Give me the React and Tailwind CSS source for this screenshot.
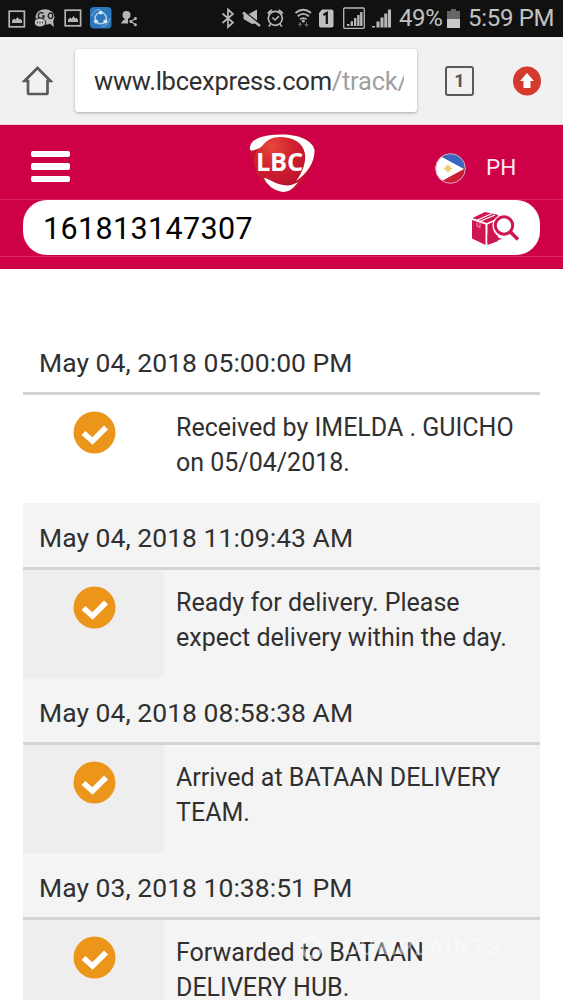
const rows = [
  { date: 'May 04, 2018 05:00:00 PM', lines: ['Received by IMELDA . GUICHO', 'on 05/04/2018.'], plain: true },
  { date: 'May 04, 2018 11:09:43 AM', lines: ['Ready for delivery. Please', 'expect delivery within the day.'] },
  { date: 'May 04, 2018 08:58:38 AM', lines: ['Arrived at BATAAN DELIVERY', 'TEAM.'] },
  { date: 'May 03, 2018 10:38:51 PM', lines: ['Forwarded to BATAAN', 'DELIVERY HUB.'] },
];

function PictureIcon({ className }) {
  return (
    <svg className={className} width="18" height="18" viewBox="0 0 18 18" fill="none">
      <rect x="1.2" y="1.2" width="15.2" height="15.6" stroke="#b5b5b5" strokeWidth="1.7" />
      <path d="M4 13V10.5L6.3 8.5L7.5 9.7L9.6 7L11.3 9.5L12.6 8.8L14 10.7V13Z" fill="#b5b5b5" />
    </svg>
  );
}

function StatusIcons() {
  return (
    <svg className="ml-[4px] shrink-0" width="108" height="37" viewBox="30 0 108 37" fill="none">
      <ellipse cx="45" cy="17" rx="9.5" ry="7.8" fill="#b5b5b5" />
      <path d="M49 23L54 27L53 20Z" fill="#b5b5b5" />
      <path d="M43.5 13.5A3 3 0 1 0 44 17V16H42M50.5 13A2.3 2.8 0 1 0 50.6 13" stroke="#202020" strokeWidth="1.4" />
      <ellipse cx="40" cy="22.5" rx="5.7" ry="4.5" fill="#c4c4c4" stroke="#181818" strokeWidth="1" />
      <path d="M37 22.5H38M39.5 22.5H40.5M42 22.5H43" stroke="#202020" strokeWidth="1.5" />
      <rect x="65.2" y="10.2" width="15.4" height="15.6" stroke="#b5b5b5" strokeWidth="1.7" />
      <path d="M68 22V19.5L70.3 17.5L71.5 18.7L73.6 16L75.3 18.5L76.6 17.8L78 19.7V22Z" fill="#b5b5b5" />
      <rect x="90" y="7" width="21.5" height="21.5" rx="4" fill="#2b77bd" />
      <circle cx="100.7" cy="18.2" r="5.6" stroke="#b7d3e9" strokeWidth="1.5" />
      <path d="M92 16A9 9 0 0 1 100 9.3M109.6 18A9 9 0 0 1 102 26.7" stroke="#85b4da" strokeWidth="1" />
      <circle cx="100.7" cy="12.5" r="2.1" fill="#d6e4ef" />
      <circle cx="96" cy="21.5" r="2.1" fill="#d6e4ef" />
      <circle cx="105.4" cy="21.5" r="2.1" fill="#d6e4ef" />
      <circle cx="126.5" cy="15" r="4" fill="#b5b5b5" />
      <path d="M121 23.5C122 20.5 124 20 125 19V17H128V20.5L128 23.5Z" fill="#b5b5b5" />
      <path d="M136 18.5L130.5 21.6L136 24.7" stroke="#b5b5b5" strokeWidth="1.1" />
      <circle cx="135.4" cy="18.5" r="1.5" fill="#b5b5b5" />
      <circle cx="130.8" cy="21.6" r="1.5" fill="#b5b5b5" />
      <circle cx="135.4" cy="24.7" r="1.5" fill="#b5b5b5" />
    </svg>
  );
}

function SystemIcons() {
  return (
    <svg className="shrink-0" width="175" height="37" viewBox="220 0 175 37" fill="none">
      <path d="M222.5 13.5L233 22.5L228 27V9.5L233 14L222.5 23" stroke="#b8b8b8" strokeWidth="1.7" />
      <path d="M243.5 14.5H248L257 9.5V23L252 24L243.5 19Z" fill="#b8b8b8" />
      <path d="M242.5 10.5L261 25" stroke="#111111" strokeWidth="2" />
      <path d="M243 12.5L260 26" stroke="#b8b8b8" strokeWidth="2.5" />
      <circle cx="275.3" cy="18.3" r="7" stroke="#b8b8b8" strokeWidth="1.7" />
      <path d="M272.3 17.5L275 20L279 16.2M270.5 24.2L268.8 26.5M280 24.2L281.8 26.5" stroke="#b8b8b8" strokeWidth="1.6" />
      <path d="M267.7 13.5L271.8 10M278.8 10L282.9 13.5" stroke="#b8b8b8" strokeWidth="2" />
      <path d="M295.5 13Q303.3 6.5 311 13M297.7 16.3Q303.3 11.5 308.8 16.3M300 19.4Q303.3 16.8 306.5 19.4" stroke="#b8b8b8" strokeWidth="1.8" />
      <circle cx="303.3" cy="21" r="1.6" fill="#b8b8b8" />
      <path d="M297.8 25L300 22L302.2 25ZM304.3 24L306.5 27L308.7 24Z" fill="#666666" />
      <path d="M300 24V27M306.5 22V25" stroke="#666666" />
      <path d="M322 9.5H331.5Q333.5 9.5 333.5 11.5V25.5Q333.5 27.5 331.5 27.5H321Q319 27.5 319 25.5V13Z" fill="#c0c0c0" />
      <path d="M323.4 15L326.8 13V24" stroke="#111111" strokeWidth="2.2" />
      <rect x="343.7" y="8" width="20.6" height="20.3" rx="1" stroke="#b8b8b8" strokeWidth="1.3" />
      <path d="M348.2 26V24M351.8 26V21.3M355.2 26V18M358.4 26V15M361.3 26V12" stroke="#b8b8b8" strokeWidth="2.4" />
      <path d="M373.5 27.5V26M378 27.5V21.5M382 27.5V17.5M385.8 27.5V13.5M389.5 27.5V9.5" stroke="#b8b8b8" strokeWidth="3.1" />
    </svg>
  );
}

function Logo() {
  return (
    <div className="relative h-[62px] w-[70px]">
      <svg width="70" height="62" viewBox="0 0 70 62" fill="none">
        <defs>
          <radialGradient id="ball" cx=".35" cy=".2" r=".8">
            <stop offset="0" stopColor="#e8483f" />
            <stop offset=".5" stopColor="#d0222f" />
            <stop offset="1" stopColor="#bd1230" />
          </radialGradient>
        </defs>
        <path d="M2 15C3 6 16 2 35 2C54 2 67 8 67.500 19C67 36 54 60 37 60C20 60 4 34 2 15Z" fill="#c5142f" />
        <circle cx="33" cy="30" r="26" fill="url(#ball)" />
        <path d="M3 15C4 7 16 3 33 2.500C52 2 66 9 67.500 18C68 30 60 42 49 49C56 40 59 30 58 22C56 10 45 5 33 5C25 5 20 8 16 13C13 17 9 17 6 18.500C3 19 2.500 17 3 15Z" fill="white" />
        <path d="M17 46C19 45 26 51 36 53C42 54 46 53 51 50C47 56 42 60 36 60C27 59 19 52 17 46Z" fill="white" />
      </svg>
      <span className="absolute left-[9px] top-[17px] font-['Open_Sans',sans-serif] text-[25.5px] leading-[25px] font-bold tracking-[-0.3px] text-white">LBC</span>
    </div>
  );
}

function ParcelSearch() {
  return (
    <svg width="50" height="36" viewBox="0 0 50 36" fill="none">
      <path d="M1 10L14.500 14.500V35L1 28.500ZM16.500 14.500L27 10V31L16.500 35Z" fill="#cf1650" />
      <path d="M1.500 8L14 2L26 4.500L29 7.500L15.500 13Z" fill="#cf1650" />
      <path d="M5.500 10.500L21 3.500M8.500 11.500L24 5" stroke="white" strokeWidth="1.3" />
      <path d="M6 12.500V16L9 17.500V12.500" stroke="#f6c5d5" strokeWidth=".8" />
      <circle cx="33" cy="16" r="11.5" fill="white" />
      <path d="M23 24.500Q26 28 31 28.500L20 33.500H16.500V24Z" fill="#cf1650" />
      <circle cx="33" cy="15.500" r="8.700" stroke="#cf1650" strokeWidth="3" />
      <path d="M39 21.500L47 29.500" stroke="#cf1650" strokeWidth="3.5" />
    </svg>
  );
}

function Watermark() {
  return (
    <div className="absolute top-[936px] left-[300px] flex items-center gap-[20px] opacity-45">
      <svg width="23" height="23" viewBox="0 0 23 23" fill="none"><circle cx="11.500" cy="11.500" r="9.500" stroke="white" strokeWidth="4" /></svg>
      <span className="text-[22px] leading-[22px] font-medium tracking-[2.2px] text-white">COMPLAINTS</span>
    </div>
  );
}

function Event({ date, lines, plain }) {
  return (
    <section className={plain ? 'h-[175px] shrink-0 bg-white' : 'h-[175px] shrink-0 bg-[#f4f4f4]'}>
      <h2 className="h-[67px] border-b-3 border-[#d4d4d4] pl-4 pt-[17px] text-[26.5px] leading-[36px] tracking-[0.03px] whitespace-nowrap">{date}</h2>
      <div className="flex h-[108px]">
        <div className={plain ? 'flex w-[141px] justify-center pl-px pt-[15.5px]' : 'flex w-[141px] justify-center bg-[#eeeeee] pl-px pt-[15.5px]'}>
          <svg width="43" height="43" viewBox="0 0 43 43" fill="none">
            <circle cx="21.5" cy="21.5" r="21" fill="#ec951b" />
            <path d="M10.500 22L19.500 30L33 16.500" stroke="white" strokeWidth="5.6" />
          </svg>
        </div>
        <p className="pl-3 pt-[16px] text-[25px] leading-[34.5px] whitespace-nowrap">
          {lines.map((line) => <span className="block" key={line}>{line}</span>)}
        </p>
      </div>
    </section>
  );
}

export default function App() {
  return (
    <div className="relative flex h-[1000px] w-[563px] flex-col overflow-hidden bg-white font-[Roboto,sans-serif] text-[#303030]">
      <div className="flex h-[37px] shrink-0 items-center bg-[#111111] text-[#c2c2c2]">
        <PictureIcon className="ml-[8px] shrink-0" />
        <StatusIcons />
        <div className="w-[82px] shrink-0" />
        <SystemIcons />
        <span className="ml-[4px] w-[45px] text-[24px] leading-[37px] tracking-[-0.4px] whitespace-nowrap">49%</span>
        <svg className="ml-[3px] shrink-0" width="13" height="19" viewBox="0 0 13 19"><path d="M0 2H4V0H9V2H13V19H0Z" fill="#666666" /><path d="M0 10H13V19H0Z" fill="#c8c8c8" /></svg>
        <span className="ml-[8px] text-[24px] leading-[37px] tracking-[-0.3px] whitespace-nowrap">5:59 PM</span>
      </div>
      <div className="flex h-[88px] shrink-0 items-center border-b border-[#f9c9dc] bg-[#f1f1f1]">
        <svg className="ml-[22px] shrink-0" width="31" height="32" viewBox="0 0 31 32" fill="none"><path d="M2.5 16L15.5 3L28.5 16H25.5V27.5Q25.5 29 24 29H7.5Q6 29 6 27.5V16Z" stroke="#5a5a5a" strokeWidth="2.7" /></svg>
        <div className="ml-[22px] flex h-[63px] w-[342px] items-center rounded-[3px] bg-white pl-[19px] shadow-[0_1px_3px_rgba(0,0,0,0.3)]">
          <span className="w-[310px] overflow-hidden text-[25.5px] leading-[36px] tracking-[-0.25px] whitespace-nowrap">www.lbcexpress.com<span className="text-[#a0a0a0]">/track/</span></span>
        </div>
        <span className="ml-[28px] flex h-[30px] w-[29px] items-center justify-center rounded-[3px] border-[2.5px] border-[#5a5a5a] text-[18px] font-bold text-[#555555]">1</span>
        <svg className="ml-[39px] shrink-0" width="28" height="30" viewBox="0 0 28 30"><ellipse cx="14" cy="15" rx="14" ry="14.500" fill="#d43b2e" /><path d="M14 7L21 15H17.500V22H10.500V15H7Z" fill="white" /></svg>
      </div>
      <header className="flex h-[75px] shrink-0 items-center border-b border-[#df2264] bg-[#ce0047]">
        <div className="ml-[31px] mt-[9px] flex w-[39px] flex-col gap-[6px]">
          <span className="h-[6.5px] rounded-[2px] bg-white" /><span className="h-[6.5px] rounded-[2px] bg-white" /><span className="h-[6.5px] rounded-[2px] bg-white" />
        </div>
        <div className="ml-[177px] mt-[2px]"><Logo /></div>
        <svg className="mt-[12px] ml-[118px] shrink-0" width="31" height="31" viewBox="0 0 31 31">
          <defs><clipPath id="round"><circle cx="15.5" cy="15.5" r="15" /></clipPath></defs>
          <g clipPath="url(#round)"><path d="M0 0H31V16H0Z" fill="#3967be" /><path d="M0 16H31V31H0Z" fill="#c91d35" /><path d="M0 0L5 3L29 16L5 29L0 31Z" fill="white" /></g>
          <circle cx="13" cy="15.5" r="2.700" fill="#edcb70" /><path d="M13 11V20M8.500 15.500H17.500M10 12.500L16 18.500M16 12.500L10 18.500" stroke="#edcb70" />
          <circle cx="15.5" cy="15.5" r="14.800" fill="none" stroke="#e3a7bd" strokeWidth="1" />
        </svg>
        <span className="mt-[11px] ml-[20px] text-[22.5px] text-[#ffe5ef]">PH</span>
      </header>
      <div className="flex h-[57px] shrink-0 justify-center border-b border-[#dc2864] bg-[#ce0047]">
        <div className="flex h-[55px] w-[517px] items-center rounded-[24px] bg-white pl-5 text-black">
          <span className="w-[428px] pt-[2px] text-[30.5px] leading-[40px] tracking-[0.35px]">161813147307</span>
          <ParcelSearch />
        </div>
      </div>
      <div className="h-[12px] shrink-0 bg-[#ce0047]" />
      <main className="mt-[59px] ml-[23px] w-[517px] shrink-0">
        {rows.map((row) => <Event key={row.date} {...row} />)}
      </main>
      <Watermark />
    </div>
  );
}
